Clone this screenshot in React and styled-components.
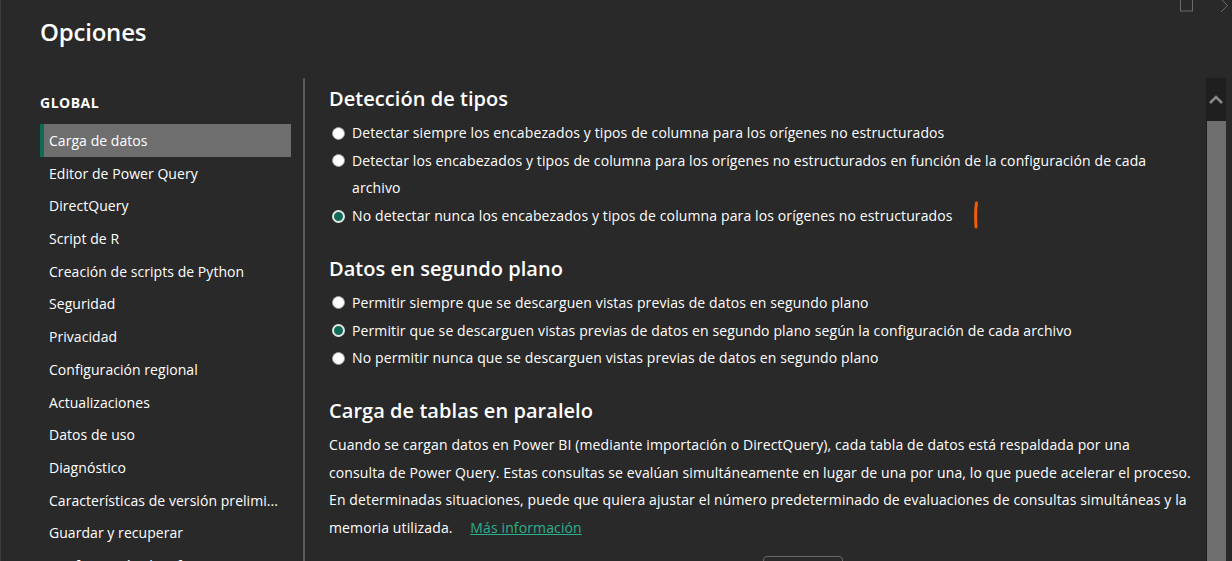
import styled, { createGlobalStyle } from "styled-components";

const GlobalStyle = createGlobalStyle`
    html, body {
        margin: 0;
        padding: 0;
        background: #292929;
    }
    body {
        font-family: "Open Sans", "Noto Sans", sans-serif;
        color: #ffffff;
    }
`;

const menu = [
    "Carga de datos",
    "Editor de Power Query",
    "DirectQuery",
    "Script de R",
    "Creación de scripts de Python",
    "Seguridad",
    "Privacidad",
    "Configuración regional",
    "Actualizaciones",
    "Datos de uso",
    "Diagnóstico",
    "Características de versión prelimi...",
    "Guardar y recuperar",
    "Configuración de informes",
];

const tipos = [
    { text: "Detectar siempre los encabezados y tipos de columna para los orígenes no estructurados" },
    { text: "Detectar los encabezados y tipos de columna para los orígenes no estructurados en función de la configuración de cada archivo" },
    { text: "No detectar nunca los encabezados y tipos de columna para los orígenes no estructurados", checked: true, mark: true },
];

const segundoPlano = [
    { text: "Permitir siempre que se descarguen vistas previas de datos en segundo plano" },
    { text: "Permitir que se descarguen vistas previas de datos en segundo plano según la configuración de cada archivo", checked: true },
    { text: "No permitir nunca que se descarguen vistas previas de datos en segundo plano" },
];

const paralelo = [
    "Cuando se cargan datos en Power BI (mediante importación o DirectQuery), cada tabla de datos está respaldada por una",
    "consulta de Power Query. Estas consultas se evalúan simultáneamente en lugar de una por una, lo que puede acelerar el proceso.",
    "En determinadas situaciones, puede que quiera ajustar el número predeterminado de evaluaciones de consultas simultáneas y la",
];

function RadioGroup({ items }) {
    return (
        <Options>
            {items.map((item) => (
                <Option key={item.text}>
                    <Radio $checked={item.checked} />
                    <OptionText>
                        {item.text}
                        {item.mark && (
                            <Mark width="6" height="28" viewBox="0 0 6 28">
                                <path d="M3.5 2 C2.5 8 2.5 18 3 26" stroke="#f25c05" strokeWidth="3" fill="none" strokeLinecap="round" />
                            </Mark>
                        )}
                    </OptionText>
                </Option>
            ))}
        </Options>
    );
}

function App() {
    return (
        <Window>
            <GlobalStyle />
            <EdgeLine />
            <WindowControls>
                <svg width="14" height="12" viewBox="0 0 14 12">
                    <rect x="0.5" y="-1" width="12" height="12" fill="none" stroke="#6b6b6b" />
                </svg>
                <svg width="12" height="12" viewBox="0 0 12 12">
                    <path d="M1 -1 L8 6 M1 12 L8 5" stroke="#6b6b6b" fill="none" />
                </svg>
            </WindowControls>
            <Title>Opciones</Title>
            <Body>
                <Sidebar>
                    <SectionLabel>GLOBAL</SectionLabel>
                    <Menu>
                        {menu.map((m, i) => (
                            <MenuItem key={m} $active={i === 0}>{m}</MenuItem>
                        ))}
                    </Menu>
                </Sidebar>
                <Divider />
                <Content>
                    <Section>
                        <Heading>Detección de tipos</Heading>
                        <RadioGroup items={tipos} />
                    </Section>
                    <Section>
                        <Heading>Datos en segundo plano</Heading>
                        <RadioGroup items={segundoPlano} />
                    </Section>
                    <Section>
                        <Heading>Carga de tablas en paralelo</Heading>
                        <Paragraph>
                            {paralelo.map((line) => (
                                <Line key={line}>{line}</Line>
                            ))}
                            <Line>
                                memoria utilizada. <Link href="#">Más información</Link>
                            </Line>
                        </Paragraph>
                        <ButtonRow>
                            <GhostButton />
                        </ButtonRow>
                    </Section>
                </Content>
                <Scrollbar>
                    <ScrollUp>
                        <svg width="16" height="10" viewBox="0 0 16 10">
                            <path d="M2 8 L8 2 L14 8" stroke="#8a8a8a" strokeWidth="2.5" fill="none" />
                        </svg>
                    </ScrollUp>
                    <Thumb />
                </Scrollbar>
            </Body>
        </Window>
    );
}

const Window = styled.div`
    position: relative;
    height: 561px;
    overflow: hidden;
    padding-left: 40px;
    box-sizing: border-box;
    display: flex;
    flex-direction: column;
`;

const EdgeLine = styled.div`
    position: absolute;
    left: 0;
    top: 0;
    bottom: 0;
    width: 1px;
    background: #3c3c3c;
`;

const WindowControls = styled.div`
    position: absolute;
    top: 0;
    right: 0;
    display: flex;
    gap: 26px;
`;

const Title = styled.h1`
    margin: 0;
    padding-top: 14px;
    height: 78px;
    flex-shrink: 0;
    box-sizing: border-box;
    font-size: 24px;
    font-weight: 600;
    line-height: 36px;
    letter-spacing: -0.2px;
`;

const Body = styled.div`
    flex: 1;
    display: flex;
    min-height: 0;
`;

const Sidebar = styled.nav`
    width: 251px;
    flex-shrink: 0;
    padding-top: 14px;
`;

const SectionLabel = styled.div`
    font-size: 14px;
    font-weight: 700;
    line-height: 22px;
    letter-spacing: 0.5px;
    margin-bottom: 10px;
`;

const Menu = styled.ul`
    list-style: none;
    margin: 0;
    padding: 0;
`;

const MenuItem = styled.li`
    height: 32.7px;
    line-height: 33px;
    padding-left: 5px;
    font-size: 14px;
    letter-spacing: 0.05px;
    white-space: nowrap;
    box-sizing: border-box;
    background: ${(p) => (p.$active ? "#6e6e6e" : "transparent")};
    border-left: 4px solid ${(p) => (p.$active ? "#0e6b58" : "transparent")};
`;

const Divider = styled.div`
    width: 2px;
    margin-left: 12px;
    background: #5c5c5c;
    border-top-left-radius: 3px;
    border-top-right-radius: 2px;
    flex-shrink: 0;
`;

const Content = styled.main`
    flex: 1;
    padding: 7px 11px 0 24px;
    display: flex;
    flex-direction: column;
    gap: 25px;
`;

const Section = styled.section`
    display: flex;
    flex-direction: column;
    gap: 6px;
`;

const Heading = styled.h2`
    margin: 0;
    font-size: 20px;
    font-weight: 600;
    line-height: 28px;
    letter-spacing: 0.05px;
`;

const Options = styled.div`
    display: flex;
    flex-direction: column;
`;

const Option = styled.label`
    display: flex;
    align-items: flex-start;
    gap: 7px;
    padding-left: 3px;
`;

const Radio = styled.span`
    flex-shrink: 0;
    width: 13px;
    height: 13px;
    margin-top: 7.5px;
    border-radius: 50%;
    box-sizing: border-box;
    background: ${(p) => (p.$checked ? "#0f6b58" : "#ffffff")};
    border: ${(p) => (p.$checked ? "2px solid #e6e6e6" : "1px solid #9a9a9a")};
`;

const OptionText = styled.span`
    position: relative;
    font-size: 14px;
    line-height: 27.7px;
    letter-spacing: 0.12px;
`;

const Mark = styled.svg`
    position: absolute;
    right: -26px;
    top: -1px;
`;

const Paragraph = styled.p`
    margin: 0;
    font-size: 14px;
    line-height: 27.7px;
    letter-spacing: 0.12px;
`;

const Line = styled.span`
    display: block;
    white-space: nowrap;
`;

const Link = styled.a`
    color: #2bb08e;
    text-decoration: underline;
    margin-left: 14px;
`;

const ButtonRow = styled.div`
    padding-left: 434px;
    padding-top: 8px;
`;

const GhostButton = styled.div`
    width: 78px;
    height: 30px;
    border: 1px solid #6a6a6a;
    border-radius: 4px;
`;

const Scrollbar = styled.div`
    width: 20px;
    margin-right: 6px;
    flex-shrink: 0;
    background: #1f1f1f;
    display: flex;
    flex-direction: column;
`;

const ScrollUp = styled.div`
    height: 43px;
    display: flex;
    align-items: center;
    justify-content: center;
`;

const Thumb = styled.div`
    flex: 1;
    background: #6e6e6e;
    margin-left: 1px;
`;

export default App;
